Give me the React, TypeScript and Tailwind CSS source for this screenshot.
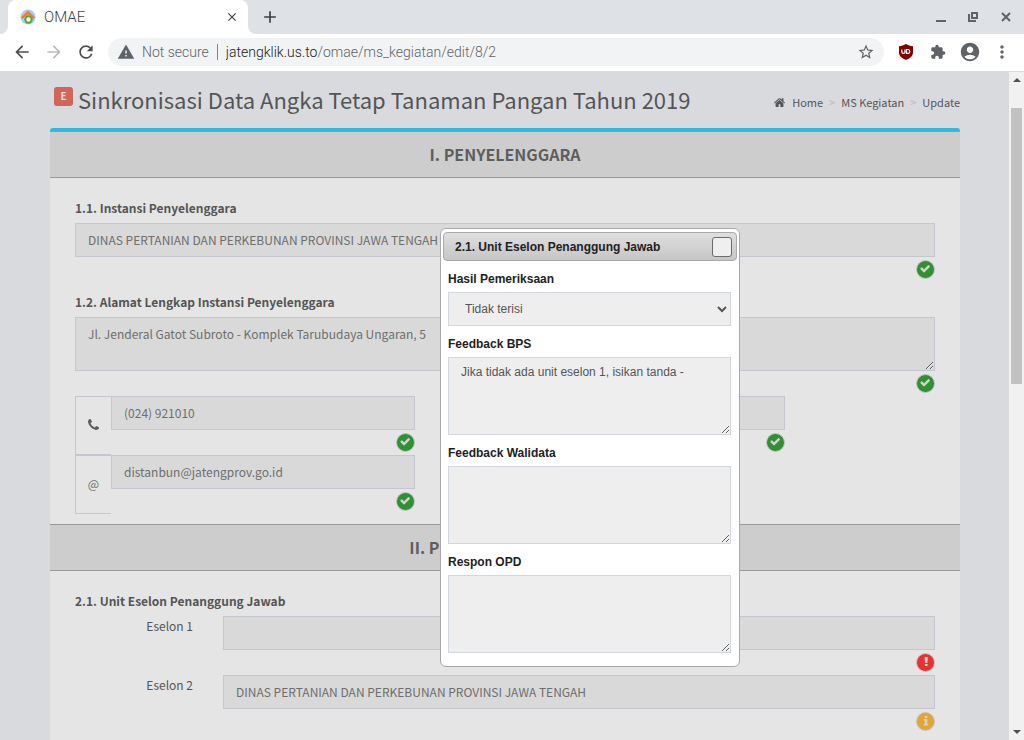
import type { ReactNode } from "react";
import {
  MdAccountCircle,
  MdAdd,
  MdArrowBack,
  MdArrowForward,
  MdClose,
  MdExtension,
  MdMoreVert,
  MdRefresh,
  MdStarBorder,
  MdWarning,
} from "react-icons/md";

const inputClass =
  "block h-[34px] w-full min-w-0 border border-[#c5c7d0] bg-[#d9d9d9] px-3 pb-[2px] text-[12px] leading-5 text-[#6e6e6e] outline-none";
const panelField =
  "block w-full border border-[#d2d6de] bg-[#eeeeee] px-3 text-[#555555] outline-none";

type Status = "ok" | "error" | "info";

function StatusIcon({ status }: { status: Status }) {
  const fill = status === "ok" ? "#319033" : status === "error" ? "#e53232" : "#e5a532";
  return (
    <svg viewBox="0 0 19 19" className="h-[19px] w-[19px]" role="img" aria-label={status}>
      <circle cx="9.5" cy="9.5" r="9" fill={fill} stroke="#c4c4c4" strokeWidth="1" />
      {status === "ok" && (
        <path
          transform="translate(3.6 3) scale(0.0062)"
          fill="#d2d2d2"
          d="M1671 566q0 40-28 68l-724 724-136 136q-28 28-68 28t-68-28l-136-136-362-362q-28-28-28-68t28-68l136-136q28-28 68-28t68 28l294 295 656-657q28-28 68-28t68 28l136 136q28 28 28 68z"
        />
      )}
      {status === "error" && (
        <path fill="#d2d2d2" d="M8.6 4h3.2l-.4 5.9H9zM8.9 10.900h2.6v2.2H8.900z" />
      )}
      {status === "info" && (
        <path fill="#d2d2d2" d="M8.7 4h2.6v2H8.700zM7.8 7h3.5v5h.9v1.600H7.800V12h.9V8.600h-.9z" />
      )}
    </svg>
  );
}

function StatusRow({ status }: { status: Status }) {
  return (
    <div className="flex h-[25px] items-start justify-end pt-[3px]">
      <StatusIcon status={status} />
    </div>
  );
}

function SectionHeader({ children }: { children: ReactNode }) {
  return (
    <h2 className="border-y border-[#999999] bg-[#cdcdcd] py-[10px] text-center text-[16px] leading-[25px] font-bold text-[#5e5e5e]">
      {children}
    </h2>
  );
}

function AddonField({
  id,
  label,
  addon,
  value,
}: {
  id: string;
  label: string;
  addon: ReactNode;
  value: string;
}) {
  return (
    <div className="flex">
      <label
        htmlFor={id}
        aria-label={label}
        className="flex w-9 shrink-0 items-center justify-center border border-r-0 border-[#c5c7d0] pb-[2px] text-[12px] text-[#6e6e6e]"
      >
        {addon}
      </label>
      <div className="min-w-0 flex-1">
        <input id={id} readOnly defaultValue={value} className={inputClass} />
        <StatusRow status="ok" />
      </div>
    </div>
  );
}

function PhoneIcon() {
  return (
    <svg viewBox="192 128 1408 1408" className="h-[11px] w-[11px]" fill="#5e5e5e" aria-hidden="true">
      <path d="M1600 1240q0 27-10 70.5t-21 68.5q-21 50-122 106-94 51-186 51-27 0-53-3.500t-57.500-12.500-47-14.500-55.500-20.500-49-18q-98-35-175-83-127-79-264-216t-216-264q-48-77-83-175-3-9-18-49t-20.500-55.500-14.500-47-12.500-57.500-3.500-53q0-92 51-186 56-101 106-122 25-11 68.500-21t70.500-10q14 0 21 3 18 6 53 76 11 19 30 54t35 63.500 31 53.500q3 4 17.500 25t21.500 35.500 7 28.500q0 20-28.500 50t-62 55-62 53-28.500 46q0 9 5 22.500t8.500 20.500 14 24 11.500 19q76 137 174 235t235 174q2 1 19 11.500t24 14 20.500 8.500 22.500 5q18 0 46-28.500t53-62 55-62 50-28.500q14 0 28.500 7t35.500 21.500 25 17.500q25 15 53.500 31t63.500 35 54 30q70 35 76 53 3 7 3 21z" />
    </svg>
  );
}

function BrowserBar() {
  return (
    <header className="shrink-0 font-['Roboto',sans-serif]">
      <div className="flex h-[34px] items-stretch bg-[#dee1e6] text-[#3c4043]">
        <svg viewBox="0 0 8 8" className="h-2 w-2 self-end" fill="#fff" aria-hidden="true">
          <path d="M8 0v8H0a8 8 0 0 0 8-8z" />
        </svg>
        <div className="flex w-60 items-center rounded-t-lg bg-white pr-[9px] pl-3">
          <svg viewBox="0 0 16 16" className="h-4 w-4 shrink-0" aria-hidden="true">
            <circle cx="8" cy="8" r="7.5" fill="#a9cdec" />
            <circle cx="8.5" cy="10.500" r="3.200" fill="#fff" stroke="#57a436" strokeWidth="2" />
            <path d="M.8 8.600 8 1.600l7.200 7-1.800 1.200L8 5.200 2.600 9.800z" fill="#ef7d31" />
          </svg>
          <span className="ml-2 flex-1 text-[15px] font-light">OMAE</span>
          <button type="button" aria-label="Close tab">
            <MdClose className="h-[14px] w-[14px]" />
          </button>
        </div>
        <svg viewBox="0 0 8 8" className="h-2 w-2 self-end" fill="#fff" aria-hidden="true">
          <path d="M0 0v8h8a8 8 0 0 1-8-8z" />
        </svg>
        <button type="button" aria-label="New tab" className="ml-1">
          <MdAdd className="h-5 w-5" />
        </button>
        <div className="ml-auto flex items-center gap-[19px] pr-[11px] text-[#5f6368]">
          <button type="button" aria-label="Minimize">
            <svg viewBox="0 0 14 14" className="h-[14px] w-[14px]" fill="currentColor">
              <path d="M3 10h10v2H3z" />
            </svg>
          </button>
          <button type="button" aria-label="Restore">
            <svg viewBox="0 0 14 14" className="h-[14px] w-[14px]" fill="none" stroke="currentColor" strokeWidth="2">
              <path d="M6 3h5v5H6zM3 4v7h7" />
            </svg>
          </button>
          <button type="button" aria-label="Close window">
            <svg viewBox="0 0 14 14" className="h-[14px] w-[14px]" fill="none" stroke="currentColor" strokeWidth="2">
              <path d="m3 3 8 8M11 3l-8 8" />
            </svg>
          </button>
        </div>
      </div>
      <div className="flex h-[38px] items-center border-b border-[#dadce0] bg-white px-3 pb-px text-[#5f6368]">
        <button type="button" aria-label="Back" className="text-[#4a4d51]">
          <MdArrowBack className="h-5 w-5" />
        </button>
        <button type="button" aria-label="Forward" className="ml-3 text-[#b9bbbe]">
          <MdArrowForward className="h-5 w-5" />
        </button>
        <button type="button" aria-label="Reload" className="ml-3 text-[#4a4d51]">
          <MdRefresh className="h-5 w-5" />
        </button>
        <div className="ml-3 flex h-7 min-w-0 flex-1 items-center rounded-full bg-[#f1f3f4] px-[9px]">
          <MdWarning className="h-[18px] w-[18px] shrink-0" />
          <span className="ml-[7px] text-[14px] font-light whitespace-nowrap">Not secure</span>
          <span className="mx-2 h-4 w-px bg-[#80868b]" />
          <span className="flex-1 truncate text-[14px] font-light text-[#5f6368]">
            <span className="text-[#202124]">jatengklik.us.to</span>/omae/ms_kegiatan/edit/8/2
          </span>
          <button type="button" aria-label="Bookmark">
            <MdStarBorder className="h-[18px] w-[18px]" />
          </button>
        </div>
        <div className="ml-3 flex items-center gap-3">
          <button type="button" aria-label="uBlock Origin">
            <svg viewBox="0 0 20 20" className="h-5 w-5" aria-hidden="true">
              <path d="M10 2c2 1.300 4.300 2 7 2.200v6c0 4-3 6-7 7.800-4-1.800-7-3.800-7-7.800v-6C5.700 4 8 3.300 10 2z" fill="#800000" />
              <path
                d="M5.800 7.500v2.300a1.600 1.600 0 0 0 3.200 0V7.500M10.500 7.500h1.700a2 2 0 0 1 0 3.900h-1.700z"
                fill="none"
                stroke="#fff"
                strokeWidth="1.200"
              />
            </svg>
          </button>
          <button type="button" aria-label="Extensions">
            <MdExtension className="h-5 w-5 p-[2px]" />
          </button>
          <button type="button" aria-label="Profile" className="-mx-px">
            <MdAccountCircle className="h-[22px] w-[22px]" />
          </button>
          <button type="button" aria-label="Menu">
            <MdMoreVert className="h-5 w-5" />
          </button>
        </div>
      </div>
    </header>
  );
}

function FeedbackPanel() {
  return (
    <section
      role="dialog"
      aria-label="2.1. Unit Eselon Penanggung Jawab"
      className="absolute top-[156px] left-[440px] w-[300px] rounded-md border border-[#aaaaaa] bg-white px-[2px] pt-[3px] pb-[13px] font-['Liberation_Sans',Arial,sans-serif] text-[12px] text-[#222222]"
    >
      <div className="flex h-[29px] items-center justify-between rounded border border-[#aaaaaa] bg-linear-to-b from-[#dfdfdf] to-[#c6c6c6] pr-1 pl-[11px]">
        <h3 className="font-bold">2.1. Unit Eselon Penanggung Jawab</h3>
        <button
          type="button"
          aria-label="Close"
          className="h-5 w-5 rounded-[3px] border border-[#6b6b6b] bg-[#efefef]"
        />
      </div>
      <form className="flex flex-col gap-[10px] pt-[10px] pr-[6px] pl-[5px]">
        <div>
          <label htmlFor="hasil" className="mb-[5px] block leading-4 font-bold">
            Hasil Pemeriksaan
          </label>
          <select id="hasil" className={`${panelField} h-[34px]`}>
            <option>Tidak terisi</option>
          </select>
        </div>
        <div>
          <label htmlFor="bps" className="mb-[5px] block leading-4 font-bold">
            Feedback BPS
          </label>
          <textarea
            id="bps"
            className={`${panelField} h-[78px] resize py-[6px] leading-4`}
            defaultValue="Jika tidak ada unit eselon 1, isikan tanda -"
          />
        </div>
        <div>
          <label htmlFor="walidata" className="mb-[5px] block leading-4 font-bold">
            Feedback Walidata
          </label>
          <textarea id="walidata" className={`${panelField} h-[78px] resize py-[6px] leading-4`} />
        </div>
        <div>
          <label htmlFor="opd" className="mb-[5px] block leading-4 font-bold">
            Respon OPD
          </label>
          <textarea id="opd" className={`${panelField} h-[78px] resize py-[6px] leading-4`} />
        </div>
      </form>
    </section>
  );
}

function Scrollbar() {
  return (
    <div className="flex w-[15px] shrink-0 flex-col items-center bg-[#f1f1f1] py-[6px]" aria-hidden="true">
      <svg viewBox="0 0 8 4" className="h-1 w-2" fill="#505050">
        <path d="M4 0l4 4H0z" />
      </svg>
      <div className="h-[4%]" />
      <div className="h-[42%] w-[11px] bg-[#c1c1c1]" />
      <svg viewBox="0 0 8 4" className="mt-auto h-1 w-2" fill="#505050">
        <path d="M0 0h8L4 4z" />
      </svg>
    </div>
  );
}

export default function App() {
  return (
    <div className="flex h-screen flex-col overflow-hidden">
      <BrowserBar />
      <div className="relative flex min-h-0 flex-1">
        <main className="min-w-0 flex-1 overflow-hidden bg-[#d9dade] pr-[49px] pl-[50px] font-['Noto_Sans_CJK_SC',sans-serif] text-[12px] leading-5 text-[#555555]">
          <div className="mb-[2px] flex h-[54px] items-center justify-between pl-1">
            <h1 className="flex items-center text-[22px] leading-8 text-[#555555]">
              <span className="mr-[5px] mb-[6px] flex h-[19px] w-[19px] items-center justify-center rounded-[3px] bg-[#d0665a] text-[10px] leading-none font-bold text-[#e0dada]">
                E
              </span>
              Sinkronisasi Data Angka Tetap Tanaman Pangan Tahun 2019
            </h1>
            <nav aria-label="Breadcrumb" className="flex items-center pt-[6px] text-[11px] text-[#555555]">
              <a href="#home" className="flex items-center gap-[7px]">
                <svg viewBox="90 250 1612 1286" className="h-[9px] w-[11px]" fill="#555555" aria-hidden="true">
                  <path d="M1472 992v480q0 26-19 45t-45 19h-384v-384h-256v384h-384q-26 0-45-19t-19-45v-480q0-1 .5-3t.5-3l575-474 575 474q1 2 1 6zm223-69l-62 74q-8 9-21 11h-3q-13 0-21-7l-692-577-692 577q-12 8-24 7-13-2-21-11l-62-74q-8-10-7-23.500t11-21.500l719-599q32-26 76-26t76 26l244 204v-195q0-14 9-23t23-9h192q14 0 23 9t9 23v408l219 182q10 8 11 21.500t-7 23.500z" />
                </svg>
                Home
              </a>
              <span className="mx-[6px] text-[#b9babd]">&gt;</span>
              <a href="#kegiatan">MS Kegiatan</a>
              <span className="mx-[6px] text-[#b9babd]">&gt;</span>
              <span>Update</span>
            </nav>
          </div>

          <div className="rounded-t-[3px] border-t-[3px] border-[#2fb9dd] bg-[#e5e5e5]">
            <SectionHeader>I. PENYELENGGARA</SectionHeader>
            <div className="px-[25px] pt-5 pb-[10px]">
              <label htmlFor="instansi" className="mb-[5px] block font-bold">
                1.1. Instansi Penyelenggara
              </label>
              <input
                id="instansi"
                readOnly
                defaultValue="DINAS PERTANIAN DAN PERKEBUNAN PROVINSI JAWA TENGAH"
                className={inputClass}
              />
              <StatusRow status="ok" />
              <label htmlFor="alamat" className="mt-[10px] mb-[5px] block font-bold">
                1.2. Alamat Lengkap Instansi Penyelenggara
              </label>
              <textarea
                id="alamat"
                readOnly
                defaultValue="Jl. Jenderal Gatot Subroto - Komplek Tarubudaya Ungaran, 5"
                className="block h-[54px] w-full resize border border-[#c5c7d0] bg-[#d9d9d9] px-3 py-[6px] text-[12px] leading-5 text-[#6e6e6e] outline-none"
              />
              <StatusRow status="ok" />
              <div className="grid grid-cols-[340fr_340fr_120fr] gap-x-[30px]">
                <AddonField id="telepon" label="Telepon" addon={<PhoneIcon />} value="(024) 921010" />
                <AddonField id="faks" label="Faksimile" addon={null} value="" />
                <div />
                <AddonField id="email" label="Email" addon="@" value="distanbun@jatengprov.go.id" />
              </div>
            </div>

            <SectionHeader>II. PENANGGUNG JAWAB</SectionHeader>
            <div className="px-[25px] pt-5 pb-[10px]">
              <h3 className="mb-[5px] font-bold">2.1. Unit Eselon Penanggung Jawab</h3>
              <div className="grid grid-cols-[118px_1fr] gap-x-[30px]">
                <label htmlFor="eselon1" className="text-right">
                  Eselon 1
                </label>
                <div>
                  <input id="eselon1" readOnly className={inputClass} />
                  <StatusRow status="error" />
                </div>
                <label htmlFor="eselon2" className="text-right">
                  Eselon 2
                </label>
                <div>
                  <input
                    id="eselon2"
                    readOnly
                    defaultValue="DINAS PERTANIAN DAN PERKEBUNAN PROVINSI JAWA TENGAH"
                    className={inputClass}
                  />
                  <StatusRow status="info" />
                </div>
              </div>
            </div>
          </div>
        </main>
        <Scrollbar />
        <FeedbackPanel />
      </div>
    </div>
  );
}
